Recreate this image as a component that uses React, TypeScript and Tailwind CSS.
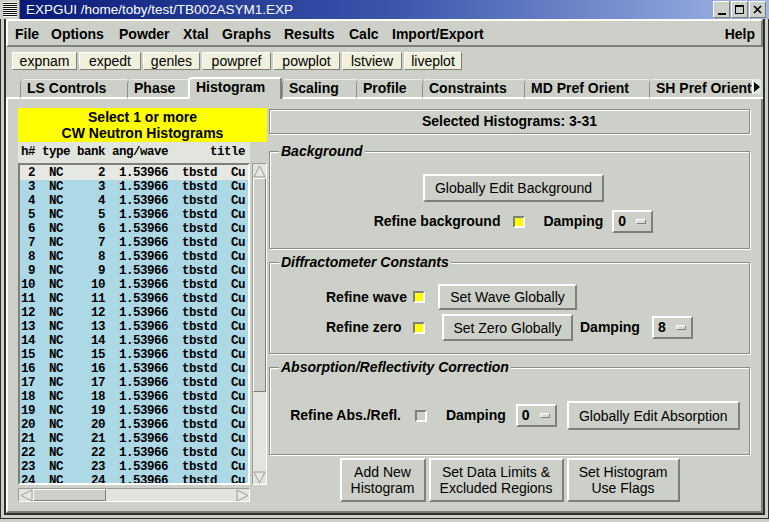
import React from 'react';

const raised = 'border-2 border-t-white border-l-white border-r-[#7d7f79] border-b-[#7d7f79]';
const raised1 = 'border border-t-white border-l-white border-r-[#7d7f79] border-b-[#7d7f79]';
const sunken = 'border-2 border-t-[#7d7f79] border-l-[#7d7f79] border-r-white border-b-white';
const groove = 'border border-[#8a8c86] shadow-[inset_1px_1px_0_#ffffff,1px_1px_0_#ffffff]';
const mono = "font-['Liberation_Mono','DejaVu_Sans_Mono',monospace] font-bold text-[12.5px] tracking-[-0.5px] whitespace-pre";

const menus = [
  { label: 'File', w: 'w-[36px]' },
  { label: 'Options', w: 'w-[68px]' },
  { label: 'Powder', w: 'w-[64px]' },
  { label: 'Xtal', w: 'w-[39px]' },
  { label: 'Graphs', w: 'w-[62px]' },
  { label: 'Results', w: 'w-[65px]' },
  { label: 'Calc', w: 'w-[43px]' },
  { label: 'Import/Export', w: 'w-[100px]' },
];

const tools = [
  { label: 'expnam', w: 'w-[65px]' },
  { label: 'expedt', w: 'w-[62px]' },
  { label: 'genles', w: 'w-[57px]' },
  { label: 'powpref', w: 'w-[69px]' },
  { label: 'powplot', w: 'w-[67px]' },
  { label: 'lstview', w: 'w-[60px]' },
  { label: 'liveplot', w: 'w-[58px]' },
];

const tabs = [
  { label: 'LS Controls', w: 'w-[107px]' },
  { label: 'Phase', w: 'w-[61px]' },
  { label: 'Histogram', w: 'w-[94px]', active: true },
  { label: 'Scaling', w: 'w-[74px]' },
  { label: 'Profile', w: 'w-[66px]' },
  { label: 'Constraints', w: 'w-[102px]' },
  { label: 'MD Pref Orient', w: 'w-[125px]' },
  { label: 'SH Pref Orient', w: 'w-[103px]' },
];

const histRows = Array.from({ length: 23 }, (_, i) => i + 2);
const fmtRow = (h: number) =>
  `${String(h).padStart(2)}  NC  ${String(h).padStart(4)}  1.53966  tbstd  Cu`;

function TitleBar() {
  return (
    <div className="h-[19px] flex">
      <div className="w-[20px] h-[19px] bg-[#cdd0c9] flex items-center justify-center border-r border-[#7d7f79]">
        <svg width="14" height="15" viewBox="0 0 14 15">
          <rect x="0" y="0" width="14" height="15" fill="#f4f4f0" />
          {[1, 3, 5, 7, 9, 11, 13].map((y) => (
            <rect key={y} x="0" y={y} width="14" height="1" fill="#111" />
          ))}
        </svg>
      </div>
      <div className="flex-1 flex items-center bg-gradient-to-r from-[#0a1a78] via-[#3d56ac] to-[#a3b6e4]">
        <span className="pl-[6px] text-white text-[13.5px] leading-[19px]">EXPGUI /home/toby/test/TB002ASYM1.EXP</span>
        <div className="ml-auto mr-[3px] flex gap-[1px]">
          <div className={`w-[17px] h-[17px] bg-[#cdd0c9] ${raised1} flex items-end justify-center pb-[2px]`}>
            <div className="w-[8px] h-[2px] bg-black" />
          </div>
          <div className={`w-[17px] h-[17px] bg-[#cdd0c9] ${raised1} flex items-center justify-center`}>
            <div className="w-[9px] h-[9px] border border-black border-t-2" />
          </div>
          <div className={`w-[17px] h-[17px] bg-[#cdd0c9] ${raised1} flex items-center justify-center`}>
            <svg width="9" height="9" viewBox="0 0 9 9">
              <path d="M1 1 L8 8 M8 1 L1 8" stroke="#000" strokeWidth="1.6" />
            </svg>
          </div>
        </div>
      </div>
    </div>
  );
}

function MenuBar() {
  return (
    <div className={`h-[28px] flex items-center pt-[2px] pl-[7px] pr-[6px] text-[14px] font-bold ${raised}`}>
      {menus.map((m) => (
        <span key={m.label} className={`${m.w} shrink-0`}>{m.label}</span>
      ))}
      <span className="ml-auto">Help</span>
    </div>
  );
}

function Toolbar() {
  return (
    <div className="h-[28px] flex items-start pt-[5px] pl-[6px] gap-[2px]">
      {tools.map((t) => (
        <div
          key={t.label}
          className={`${t.w} h-[18px] bg-[#f0f0dc] ${raised1} flex items-center justify-center text-[14px] leading-[16px]`}
        >
          {t.label}
        </div>
      ))}
    </div>
  );
}

function Tabs() {
  return (
    <div className="h-[24px] flex items-end text-[14px] font-bold">
      <div className="w-[14px] h-[2px] bg-white self-end" />
      {tabs.map((t) =>
        t.active ? (
          <div
            key={t.label}
            className={`${t.w} shrink-0 h-[22px] border-t-2 border-l-2 border-r-2 border-t-white border-l-white border-r-[#7d7f79] rounded-tl-[4px] pl-[6px] leading-[16px] whitespace-nowrap`}
          >
            {t.label}
          </div>
        ) : (
          <div
            key={t.label}
            className={`${t.w} shrink-0 h-[20px] border-l border-t border-l-[#8e908a] border-t-[#eceee8] rounded-tl-[5px] border-b-2 border-b-white pl-[6px] leading-[16px] whitespace-nowrap overflow-hidden`}
          >
            {t.label}
          </div>
        )
      )}
      <div className="w-[10px] h-[20px] border-b-2 border-b-white flex items-start">
        <div className="w-[9px] h-[15px] bg-[#e4e6e0] border-l border-white flex items-center justify-center">
          <svg width="6" height="10" viewBox="0 0 6 10">
            <path d="M0 0 L6 5 L0 10 Z" fill="#000" />
          </svg>
        </div>
      </div>
      <div className="flex-1 h-[2px] bg-white" />
    </div>
  );
}

function Arrow({ dir }: { dir: 'up' | 'down' | 'left' | 'right' }) {
  const pts = {
    up: '6.5,1 12,12 1,12',
    down: '1,1 12,1 6.5,12',
    left: '1,6.5 12,1 12,12',
    right: '1,1 12,6.5 1,12',
  }[dir];
  return (
    <svg width="13" height="13" viewBox="0 0 13 13" className="shrink-0">
      <polygon points={pts} fill="#e6e8e2" stroke="#9a9c96" strokeWidth="1" />
    </svg>
  );
}

function Checkbox({ on }: { on?: boolean }) {
  return <div className={`w-[12px] h-[12px] shrink-0 ${sunken} ${on ? 'bg-[#ffff00]' : 'bg-[#cdd0c9]'}`} />;
}

function MenuButton({ value }: { value: string }) {
  return (
    <div className={`w-[41px] h-[23px] shrink-0 ${raised} flex items-center pl-[4px] font-bold text-[14px]`}>
      <span className="w-[18px]">{value}</span>
      <div className={`w-[10px] h-[5px] ${raised1} bg-[#dcdfd8]`} />
    </div>
  );
}

function Button({ w, h, children }: { w: string; h: string; children: React.ReactNode }) {
  return (
    <div className={`${w} ${h} shrink-0 ${raised} flex flex-col items-center justify-center text-[14px] leading-[16px] text-center whitespace-nowrap`}>
      {children}
    </div>
  );
}

function LeftPanel() {
  return (
    <div className="w-[249px] shrink-0 flex flex-col pt-[9px]">
      <div className="h-[34px] bg-[#ffff00] flex flex-col items-center justify-center font-bold text-[14px] leading-[16px]">
        <span>Select 1 or more</span>
        <span>CW Neutron Histograms</span>
      </div>
      <div className={`w-[232px] h-[21px] bg-[#e2e4de] pl-[3px] leading-[21px] ${mono}`}>
        {'h# type bank ang/wave      title'}
      </div>
      <div className="flex">
        <div className={`w-[232px] h-[322px] ${sunken} bg-[#e6e8e3] overflow-hidden pt-[1px]`}>
          {histRows.map((h) => (
            <div
              key={h}
              className={`h-[14px] leading-[14px] pl-[1px] ${mono} ${h === 2 ? 'bg-[#e6e8e3]' : 'bg-[#add8e6]'}`}
            >
              {fmtRow(h)}
            </div>
          ))}
        </div>
        <div className="ml-[2px] w-[15px] h-[322px] bg-[#e2e4de] border border-t-[#9a9c96] border-l-[#9a9c96] border-r-white border-b-white flex flex-col">
          <div className="h-[14px] flex items-center justify-center">
            <Arrow dir="up" />
          </div>
          <div className={`h-[214px] bg-[#cdd0c9] ${raised1}`} />
          <div className="flex-1" />
          <div className="h-[14px] flex items-center justify-center">
            <Arrow dir="down" />
          </div>
        </div>
      </div>
      <div className="mt-[3px] w-[232px] h-[14px] bg-[#e2e4de] border border-t-[#9a9c96] border-l-[#9a9c96] border-r-white border-b-white flex items-center">
        <div className="w-[14px] flex justify-center">
          <Arrow dir="left" />
        </div>
        <div className={`w-[73px] h-[12px] bg-[#cdd0c9] ${raised1}`} />
        <div className="flex-1" />
        <div className="w-[14px] flex justify-center">
          <Arrow dir="right" />
        </div>
      </div>
    </div>
  );
}

function Frame({ title, h, className, children }: { title: string; h: string; className?: string; children: React.ReactNode }) {
  return (
    <fieldset className={`${h} ${groove} ${className ?? ''}`}>
      <legend className="ml-[9px] px-[2px] bg-[#cdd0c9] text-[14px] leading-[17px] font-bold italic">{title}</legend>
      {children}
    </fieldset>
  );
}

function RightPanel() {
  return (
    <div className="ml-[2px] flex-1 flex flex-col pt-[10px] text-[14px]">
      <div className={`h-[25px] ${groove} flex items-center justify-center font-bold`}>
        Selected Histograms: 3-31
      </div>

      <Frame title="Background" h="h-[106px]" className="mt-[9px]">
        <div className="flex flex-col items-center pt-[14px] pl-[8px]">
          <Button w="w-[181px]" h="h-[28px]">Globally Edit Background</Button>
          <div className="mt-[8px] flex items-center font-bold">
            <span>Refine background</span>
            <span className="ml-[13px]"><Checkbox on /></span>
            <span className="ml-[18px]">Damping</span>
            <span className="ml-[9px]"><MenuButton value="0" /></span>
          </div>
        </div>
      </Frame>

      <Frame title="Diffractometer Constants" h="h-[100px]" className="mt-[5px]">
        <div className="flex justify-center pt-[13px]">
          <div className="grid grid-cols-[87px_22px_145px_72px_41px] grid-rows-[26px_27px] gap-y-[4px] items-center font-bold">
            <span>Refine wave</span>
            <Checkbox on />
            <div className="flex justify-center font-normal">
              <Button w="w-[139px]" h="h-[26px]">Set Wave Globally</Button>
            </div>
            <span />
            <span />
            <span>Refine zero</span>
            <Checkbox on />
            <div className="flex justify-center font-normal">
              <Button w="w-[131px]" h="h-[27px]">Set Zero Globally</Button>
            </div>
            <span>Damping</span>
            <MenuButton value="8" />
          </div>
        </div>
      </Frame>

      <Frame title="Absorption/Reflectivity Correction" h="h-[96px]" className="mt-[5px]">
        <div className="flex items-center justify-center pt-[25px] pl-[11px]">
          <span className="font-bold">Refine Abs./Refl.</span>
          <span className="ml-[14px]"><Checkbox /></span>
          <span className="ml-[19px] font-bold">Damping</span>
          <span className="ml-[10px]"><MenuButton value="0" /></span>
          <span className="ml-[10px]">
            <Button w="w-[173px]" h="h-[29px]">Globally Edit Absorption</Button>
          </span>
        </div>
      </Frame>

      <div className="mt-[3px] flex justify-center gap-[3px] text-[13.5px]">
        <Button w="w-[86px]" h="h-[44px]">
          <span>Add New</span>
          <span>Histogram</span>
        </Button>
        <Button w="w-[135px]" h="h-[44px]">
          <span>Set Data Limits &amp;</span>
          <span>Excluded Regions</span>
        </Button>
        <Button w="w-[113px]" h="h-[44px]">
          <span>Set Histogram</span>
          <span>Use Flags</span>
        </Button>
      </div>
    </div>
  );
}

export default function App() {
  return (
    <div className="w-[769px] h-[522px] overflow-hidden bg-[#cdd0c9] font-['Liberation_Sans',Arial,sans-serif] text-black select-none">
      <TitleBar />
      <div className="h-[500px] border-x border-b border-[#2e2e2e] px-[3px] pb-[3px] flex">
        <div className="flex-1 min-w-0 flex flex-col border-l-2 border-r-2 border-b-2 border-[#2e2e2e]">
          <MenuBar />
          <Toolbar />
          <Tabs />
          <div className="flex-1 min-h-0 flex border-l-2 border-l-white border-r-2 border-r-[#7d7f79] border-b-2 border-b-[#7d7f79] pl-[10px] pr-[11px]">
            <LeftPanel />
            <RightPanel />
          </div>
        </div>
      </div>
    </div>
  );
}
